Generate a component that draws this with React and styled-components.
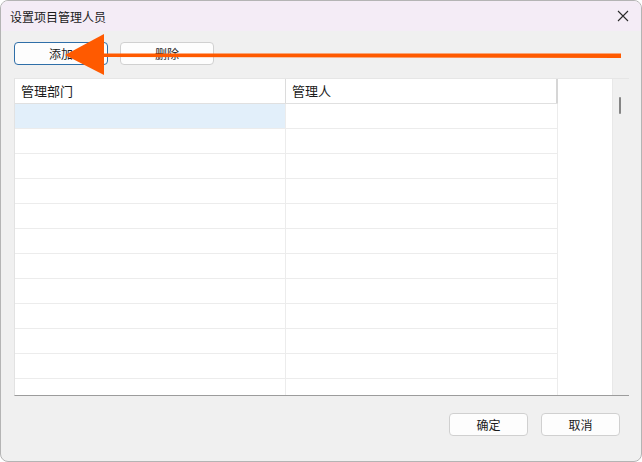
import React from 'react'
import styled, { createGlobalStyle } from 'styled-components'

const GlobalStyle = createGlobalStyle`
  html, body {
    margin: 0;
    padding: 0;
    background: #ffffff;
  }
  body {
    font-family: "Segoe UI", "Noto Sans CJK SC", "Noto Sans", sans-serif;
    color: #1a1a1a;
  }
`

const Window = styled.div`
  position: relative;
  width: 640px;
  height: 460px;
  border: 1px solid #b4b4b4;
  border-radius: 8px;
  background: #f0f0f0;
  display: flex;
  flex-direction: column;
  overflow: hidden;
`

const TitleBar = styled.div`
  height: 30px;
  flex: none;
  display: flex;
  align-items: center;
  justify-content: space-between;
  padding: 0 8px 0 9px;
  background: #f4ecf6;
  font-family: "Noto Sans CJK SC", sans-serif;
  font-size: 12px;
`

const CloseButton = styled.button`
  width: 20px;
  height: 20px;
  border: 0;
  padding: 0;
  background: transparent;
  display: flex;
  align-items: center;
  justify-content: center;
`

const Body = styled.div`
  flex: 1;
  display: flex;
  flex-direction: column;
  padding: 0 12px 0 13px;
`

const Toolbar = styled.div`
  display: flex;
  gap: 12px;
  margin-top: 11px;
`

const Button = styled.button`
  width: ${p => p.$w}px;
  height: 23px;
  box-sizing: border-box;
  border: 1px solid ${p => (p.$focused ? '#2f6fa8' : '#d0d0d0')};
  border-radius: 4px;
  background: #fdfdfd;
  font-family: "Noto Sans CJK SC", sans-serif;
  font-size: 12px;
  color: #1a1a1a;
  padding: 0;
  line-height: 21px;
`

const Grid = styled.div`
  margin-top: 13px;
  height: 318px;
  box-sizing: border-box;
  background: #ffffff;
  border-top: 1px solid #e6e6e6;
  border-left: 1px solid #e2e2e2;
  border-bottom: 1px solid #9c9c9c;
  display: grid;
  grid-template-columns: 543px 1fr 17px;
  overflow: hidden;
`

const Table = styled.div`
  display: flex;
  flex-direction: column;
  overflow: hidden;
`

const Row = styled.div`
  display: grid;
  grid-template-columns: 271px 272px;
  height: 25px;
  flex: none;
  box-sizing: border-box;
  border-bottom: 1px solid ${p => (p.$head ? '#e0e0e0' : '#ececec')};
`

const Cell = styled.div`
  box-sizing: border-box;
  border-right: ${p => (p.$head && p.$last ? '2px solid #d6d6d6' : `1px solid ${p.$head ? '#dcdcdc' : '#ececec'}`)};
  background: ${p => (p.$selected ? '#e2effa' : 'transparent')};
  font-family: "Noto Sans CJK SC", sans-serif;
  font-size: 13px;
  line-height: 24px;
  padding-left: 6px;
  white-space: nowrap;
`

const Blank = styled.div`
  background: #ffffff;
`

const ScrollTrack = styled.div`
  background: #f0f0f0;
  border-left: 1px solid #e8e8e8;
  position: relative;
`

const Thumb = styled.div`
  position: absolute;
  left: 6px;
  top: 18px;
  width: 2px;
  height: 17px;
  border-radius: 1px;
  background: #858585;
`

const Footer = styled.div`
  display: flex;
  justify-content: flex-end;
  gap: 13px;
  margin-top: 17px;
  padding-right: 9px;
`

const Pointer = styled.svg`
  position: absolute;
  left: 0;
  top: 0;
  pointer-events: none;
`

const rows = Array.from({ length: 12 }, (_, i) => i)

export default function App () {
  return (
    <>
      <GlobalStyle />
      <Window>
        <TitleBar>
          <span>设置项目管理人员</span>
          <CloseButton aria-label='close'>
            <svg width='12' height='12' viewBox='0 0 12 12'>
              <path d='M1 1 L11 11 M11 1 L1 11' stroke='#2a2a2a' strokeWidth='1.1' fill='none' />
            </svg>
          </CloseButton>
        </TitleBar>
        <Body>
          <Toolbar>
            <Button $w={94} $focused>添加</Button>
            <Button $w={94}>删除</Button>
          </Toolbar>
          <Grid>
            <Table>
              <Row $head>
                <Cell $head>管理部门</Cell>
                <Cell $head $last>管理人</Cell>
              </Row>
              {rows.map(i => (
                <Row key={i}>
                  <Cell $selected={i === 0} />
                  <Cell $last />
                </Row>
              ))}
            </Table>
            <Blank />
            <ScrollTrack>
              <Thumb />
            </ScrollTrack>
          </Grid>
          <Footer>
            <Button $w={79}>确定</Button>
            <Button $w={79}>取消</Button>
          </Footer>
        </Body>
        <Pointer width='642' height='462' viewBox='0 0 642 462'>
          <path d='M99 52.5 L620 52.5 L620 57 L99 56 Z' fill='#ff5a00' />
          <polygon points='64,54 103,33 103,74' fill='#ff5a00' />
        </Pointer>
      </Window>
    </>
  )
}
